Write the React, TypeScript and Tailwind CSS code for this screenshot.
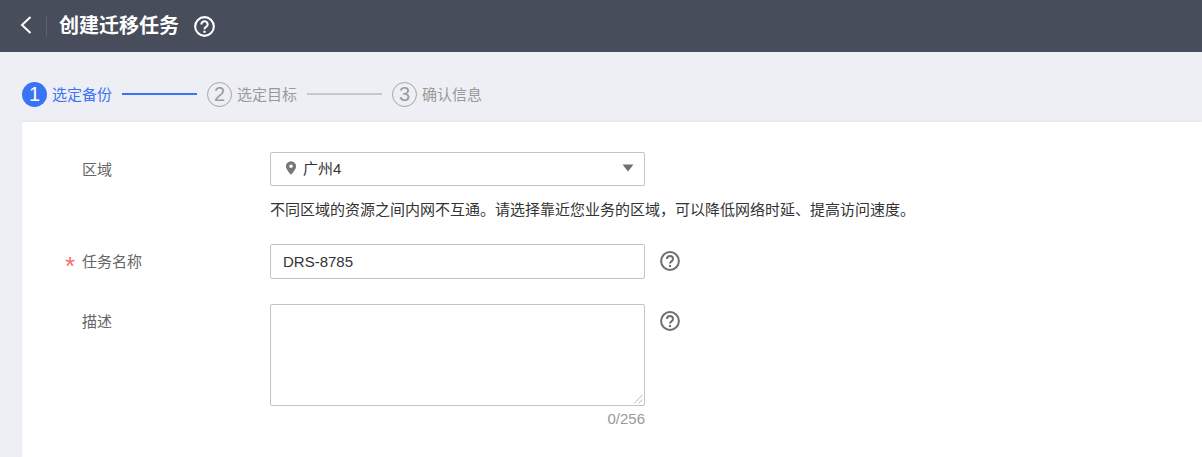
const FONT = "font-['Liberation_Sans','Noto_Sans_CJK_SC',sans-serif]";

function HelpIcon({ className }: { className: string }) {
  return (
    <svg className={className} viewBox="0 0 20 20" fill="none" stroke="currentColor">
      <circle cx="10" cy="10" r="8.9" strokeWidth="2" />
      <path d="M7 8a3 3 0 0 1 6 0c0 1.100-.6 1.700-1.500 2.300-.9.6-1.500 1.100-1.500 2.200" strokeWidth="2" />
      <circle cx="10" cy="15" r="1.200" fill="currentColor" stroke="none" />
    </svg>
  );
}

function Step({ num, text, active }: { num: number; text: string; active?: boolean }) {
  return (
    <div className="flex items-center h-[25px]">
      <div
        className={`w-[25px] h-[25px] rounded-full flex items-center justify-center text-[20px] pb-[2px] ${
          active ? 'bg-[#3b73f6] text-white' : 'border border-[#a5a5a5] text-[#9a9a9a]'
        }`}
      >
        {num}
      </div>
      <span className={`ml-[5px] mt-[1px] text-[15px] ${active ? 'text-[#3b73f6]' : 'text-[#999999]'}`}>{text}</span>
    </div>
  );
}

function Row({ label, required, children }: { label: string; required?: boolean; children: React.ReactNode }) {
  return (
    <div className="flex items-start">
      <div className="w-[248px] flex items-center h-[34px] pl-[44px] pt-[2px] text-[15px] text-[#666666] relative">
        {required && <span className="absolute left-[43px] top-[9px] text-[#f66f6a] text-[26px] leading-[26px]">*</span>}
        <span className="ml-[16px]">{label}</span>
      </div>
      {children}
    </div>
  );
}

export default function App() {
  return (
    <div className={`w-[1202px] h-[457px] overflow-hidden bg-[#eeeff4] ${FONT}`}>
      <div className="h-[52px] bg-[#484d5b] flex items-center text-white">
        <svg className="w-[12px] h-[18px] ml-[20px] mb-[3px]" viewBox="0 0 12 18" fill="none" stroke="currentColor" strokeWidth="2">
          <path d="M10.500 1 2 9l8.500 8" />
        </svg>
        <div className="w-px h-[20px] bg-[#5f6268] ml-[14px]" />
        <h1 className="ml-[12px] text-[20px] font-bold leading-none">创建迁移任务</h1>
        <HelpIcon className="w-[21px] h-[21px] ml-[15px]" />
      </div>

      <div className="h-[70px] pl-[22px] pt-[30px] flex items-start">
        <Step num={1} text="选定备份" active />
        <div className="w-[75px] h-[2px] bg-[#3b73f6] mx-[10px] mt-[11px]" />
        <Step num={2} text="选定目标" />
        <div className="w-[75px] h-[2px] bg-[#c8c8c8] mx-[10px] mt-[11px]" />
        <Step num={3} text="确认信息" />
      </div>

      <div className="ml-[22px] h-[335px] bg-white pt-[30px] shadow-[0_-1px_2px_rgba(0,0,0,0.04)]">
        <Row label="区域">
          <div>
            <div className="w-[375px] h-[34px] border border-[#c4c4c4] rounded-[2px] flex items-center pl-[13px] pr-[10px] text-[15px] text-[#333333]">
              <svg className="w-[14px] h-[16px] text-[#777777] mr-[5px] mb-[3px]" viewBox="0 0 12 14" fill="currentColor">
                <path
                  fillRule="evenodd"
                  d="M6 1a4.500 4.500 0 0 1 4.500 4.500C10.500 8.300 6 13 6 13S1.500 8.300 1.500 5.500A4.500 4.500 0 0 1 6 1Zm0 3a1.500 1.500 0 1 0 0 3 1.500 1.500 0 0 0 0-3Z"
                />
              </svg>
              <span>广州4</span>
              <svg className="w-[12px] h-[8px] ml-auto mb-[2px] text-[#707070]" viewBox="0 0 12 8" fill="currentColor">
                <path d="M0.500 0.500h11L6 7.500Z" />
              </svg>
            </div>
            <p className="mt-[14px] text-[15px] leading-[20px] text-[#333333] whitespace-nowrap">
              不同区域的资源之间内网不互通。请选择靠近您业务的区域，可以降低网络时延、提高访问速度。
            </p>
          </div>
        </Row>

        <div className="mt-[24px]">
          <Row label="任务名称" required>
            <input
              readOnly
              value="DRS-8785"
              className="w-[375px] h-[35px] border border-[#c4c4c4] rounded-[2px] px-[12px] text-[15px] text-[#333333] outline-none"
            />
            <HelpIcon className="w-[20px] h-[20px] ml-[15px] mt-[7px] text-[#6f6f6f]" />
          </Row>
        </div>

        <div className="mt-[25px]">
          <Row label="描述">
            <div>
              <div className="relative">
                <textarea className="block w-[375px] h-[102px] border border-[#c4c4c4] rounded-[2px] outline-none resize-none" readOnly />
                <svg className="absolute right-[2px] bottom-[2px] w-[10px] h-[10px] text-[#b5b5b5]" viewBox="0 0 10 10" fill="none" stroke="currentColor">
                  <path d="M1 9.500 9.500 1M5.500 9.500 9.500 5.500" />
                </svg>
              </div>
              <div className="text-right text-[15px] leading-[16px] mt-[5px] text-[#999999]">0/256</div>
            </div>
            <HelpIcon className="w-[20px] h-[20px] ml-[15px] mt-[7px] text-[#6f6f6f]" />
          </Row>
        </div>
      </div>
    </div>
  );
}
